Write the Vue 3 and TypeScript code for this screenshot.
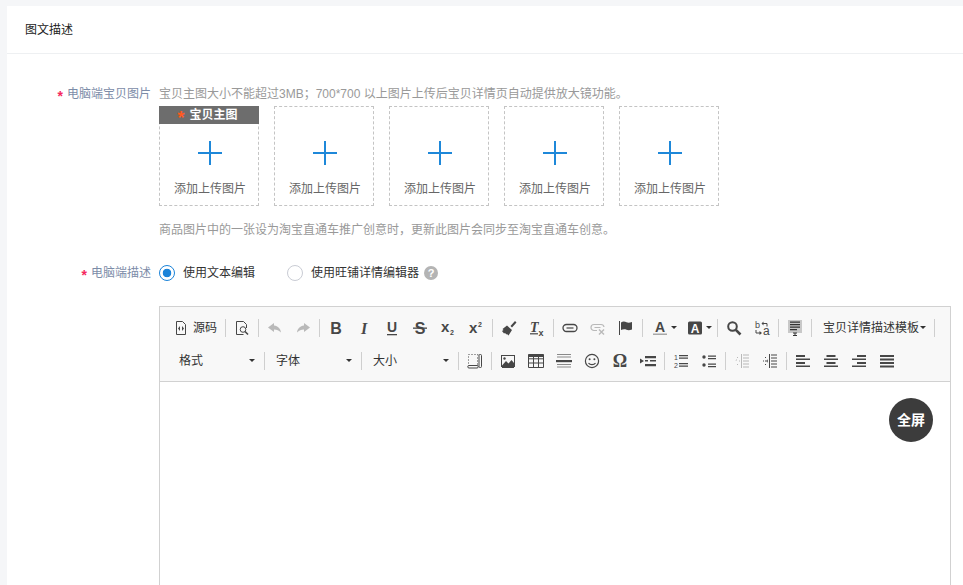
<script setup lang="ts">
interface Tool {
  kind: 'sep' | 'icon' | 'source' | 'color' | 'combo' | 'drop'
  name?: string
  label?: string
  off?: boolean
}

const icons: Record<string, string> = {
  source: '<path d="M3.5 1.5h6l3 3v10h-9z" fill="none" stroke="#474747"/><path d="M7 6L5 8.5 7 11zM9 6l2 2.5L9 11z" fill="#474747"/>',
  preview: '<path d="M12.5 8V4.5l-3-3h-7v13h7" fill="none" stroke="#474747"/><circle cx="9" cy="9.5" r="2.8" fill="none" stroke="#474747"/><path d="M11 11.5l3 3" stroke="#474747" stroke-width="1.6"/>',
  undo: '<path d="M7 3L1 7.5 7 12V9.5c3 0 5 1 7 3-.5-4-3-6.5-7-7z" fill="#474747"/>',
  redo: '<path d="M9 3l6 4.5L9 12V9.5c-3 0-5 1-7 3 .5-4 3-6.5 7-7z" fill="#474747"/>',
  bold: '<text x="8" y="14" text-anchor="middle" font-size="16" font-weight="700" font-family="Liberation Sans" fill="#474747">B</text>',
  italic: '<text x="8" y="14" text-anchor="middle" font-size="16" font-style="italic" font-weight="700" font-family="Liberation Serif" fill="#474747">I</text>',
  underline: '<text x="8" y="12" text-anchor="middle" font-size="14" font-weight="700" font-family="Liberation Sans" fill="#474747">U</text><path d="M3 14h10v1.3H3z" fill="#474747"/>',
  strike: '<text x="8" y="14" text-anchor="middle" font-size="16" font-weight="700" font-family="Liberation Sans" fill="#474747">S</text><path d="M1 7.5h14v1.3H1z" fill="#474747"/>',
  sub: '<text x="1" y="12" font-size="15" font-weight="700" font-family="Liberation Sans" fill="#474747">x</text><text x="10" y="15" font-size="7" font-weight="700" font-family="Liberation Sans" fill="#474747">2</text>',
  sup: '<text x="1" y="13" font-size="15" font-weight="700" font-family="Liberation Sans" fill="#474747">x</text><text x="10" y="7" font-size="7" font-weight="700" font-family="Liberation Sans" fill="#474747">2</text>',
  brush: '<path d="M9.5 6L14 1l1.5 1.5L11 7.5zM6 5.5l5 4.5-3.5 5.5L6 14l-.5.5L4 13l-1 .5L1 11l1.5-1-1-1z" fill="#474747"/>',
  clear: '<text x="1" y="12" font-size="14" font-style="italic" font-weight="700" font-family="Liberation Serif" fill="#474747">T</text><path d="M1 13.2h8v1.2H1z" fill="#474747"/><text x="9.5" y="15.5" font-size="9" font-weight="700" font-family="Liberation Sans" fill="#474747">x</text>',
  link: '<path d="M4.5 4.5h7a3.5 3.5 0 0 1 0 7h-7a3.5 3.5 0 0 1 0-7z" fill="none" stroke="#474747" stroke-width="1.3"/><path d="M4.5 8h7" stroke="#474747" stroke-width="1.2"/>',
  unlink: '<path d="M7 10.5H4a3 3 0 0 1 0-6h7a3 3 0 0 1 3 2.5M4.5 7.5h6" fill="none" stroke="#474747" stroke-width="1.2"/><path d="M9 9.5l5 5M14 9.5l-5 5" stroke="#474747" stroke-width="1.4"/>',
  flag: '<path d="M1.5 1v14" stroke="#474747"/><path d="M3 2.5c2-1.5 4-1 5.5-.3s3 .6 5.5-.2v7.5c-2.500.8-4 .8-5.500.2S5 9 3 10z" fill="#474747"/>',
  textColor: '<text x="8" y="12" text-anchor="middle" font-size="14" font-weight="700" font-family="Liberation Sans" fill="#474747">A</text><path d="M1 13.5h14V15H1z" fill="#a8a8a8"/>',
  bgColor: '<path d="M2.5 1.5h11A1.500 1.500 0 0 1 15 3v10a1.500 1.500 0 0 1-1.500 1.500h-11A1.500 1.500 0 0 1 1 13V3a1.500 1.500 0 0 1 1.500-1.500z" fill="#474747"/><text x="8" y="12.5" text-anchor="middle" font-size="12" font-weight="700" font-family="Liberation Sans" fill="#fff">A</text>',
  search: '<circle cx="6.5" cy="6.5" r="4.3" fill="none" stroke="#474747" stroke-width="2"/><path d="M9.8 9.800l4.700 4.700" stroke="#474747" stroke-width="2.6"/>',
  replace: '<text x="1" y="8" font-size="9" font-family="Liberation Sans" fill="#474747">b</text><text x="9" y="15" font-size="12" font-family="Liberation Sans" fill="#474747">a</text><path d="M9 3.5h4v3M2 10v3h4" fill="none" stroke="#474747"/><path d="M9.5 1.5l-2 2 2 2zM5.5 11l2.500 2-2.500 2z" fill="#474747"/>',
  template: '<path d="M1 0h14v13H1z" fill="#c8c8c8"/><path d="M3 1.5h10v1.300H3zM3 4h10v1.300H3zM3 6.500h10v1.300H3zM3 9h7v1.300H3z" fill="#333"/><path d="M6 12.500h4v1H8.500V15H10v1H6v-1h1.500v-1.500H6z" fill="#333"/>',
  blocks: '<path d="M1.5 1.5h1M4.5 1.5h1M7.5 1.5h1M10.5 1.5h.5v1M10.5 4.5v1M10.5 7.5v1M10.5 10.5v1M1.5 3.5v1M1.5 6.5v1M1.5 9.5v1" stroke="#474747" fill="none"/><path d="M2 12.500h8a1 1 0 0 1 0 2.500H2a1 1 0 0 1 0-2.500zM13 1.500h.5a1 1 0 0 1 1 1v11a1 1 0 0 1-1 1H13a1 1 0 0 1-1-1v-11a1 1 0 0 1 1-1z" fill="none" stroke="#474747"/>',
  image: '<path fill-rule="evenodd" d="M1 2h14v12H1zM2 3v10h12V3z" fill="#474747"/><path d="M2 12.500l4-4.500 2.500 2.500 3-3.500 2.500 3v5H2z" fill="#474747"/><circle cx="4.5" cy="5.5" r="1.2" fill="#474747"/>',
  table: '<path d="M.5 1.500h15V4H.5z" fill="#474747"/><path d="M.5 1.500h15v13H.5zM.5 5.800h15M.5 10h15M5.500 3.500v11M10.500 3.500v11" fill="none" stroke="#474747"/>',
  hr: '<path d="M1 1.5h14M1 4h14M1 11.500h14M1 14h14" stroke="#8a8a8a"/><path d="M0 7h16v2.200H0z" fill="#474747"/>',
  smile: '<circle cx="8" cy="8" r="6.6" fill="none" stroke="#474747" stroke-width="1.2"/><circle cx="5.6" cy="6.3" r="1" fill="#474747"/><circle cx="10.4" cy="6.3" r="1" fill="#474747"/><path d="M4.5 10c1.500 2.200 5.500 2.200 7 0" fill="none" stroke="#474747" stroke-width="1.2"/>',
  omega: '<text x="8" y="14" text-anchor="middle" font-size="18" font-weight="700" font-family="Liberation Serif" fill="#474747">Ω</text>',
  indentBlock: '<path d="M0 5.500l4 2.500-4 2.500zM5 3h11v2.200H5zM5 7h3v1.500H5zM10 7h6v1.500h-6zM5 11h11v2.200H5z" fill="#474747"/>',
  ol: '<text x="1" y="7" font-size="7" font-family="Liberation Sans" fill="#474747">1</text><text x="1" y="14.5" font-size="7" font-family="Liberation Sans" fill="#474747">2</text><path d="M6 2h9v1.200H6zM6 4.500h9v1.200H6zM6 10h9v1.200H6zM6 12.500h9v1.200H6z" fill="#474747"/>',
  ul: '<circle cx="3" cy="4" r="1.7" fill="#474747"/><circle cx="3" cy="12" r="1.7" fill="#474747"/><path d="M7 2.500h8v1.200H7zM7 5h8v1.200H7zM7 10.500h8v1.200H7zM7 13h8v1.200H7z" fill="#474747"/>',
  outdent: '<path d="M9 1.500h6v1.100H9zM9 4.500h6v1.100H9zM9 7.500h6v1.100H9zM9 10.500h6v1.100H9zM9 13.500h6v1.100H9zM7 1v14h1V1z" fill="#474747"/><path d="M1 7.500h2V6l-2 2zM5 7.500h1v1H5zM3 4h1v1H3zM3 11h1v1H3z" fill="#474747"/>',
  indent: '<path d="M9 1.500h6v1.100H9zM9 4.500h6v1.100H9zM9 7.500h6v1.100H9zM9 10.500h6v1.100H9zM9 13.500h6v1.100H9zM7 1v14h1V1z" fill="#474747"/><path d="M1 7.500h1v1H1zM3 7.500h2V6l1 2-1 2V8.500H3zM3 4h1v1H3zM3 11h1v1H3z" fill="#474747"/>',
  alignLeft: '<path d="M1 2h9v2H1zM1 5.500h14V7H1zM1 9h9v2H1zM1 12.500h14V14H1z" fill="#474747"/>',
  alignCenter: '<path d="M3.500 2h9v2h-9zM1 5.500h14V7H1zM3.500 9h9v2h-9zM1 12.500h14V14H1z" fill="#474747"/>',
  alignRight: '<path d="M6 2h9v2H6zM1 5.500h14V7H1zM6 9h9v2H6zM1 12.500h14V14H1z" fill="#474747"/>',
  justify: '<path d="M1 2h14v2H1zM1 5.500h14v2H1zM1 9h14v2H1zM1 12.500h14v2H1z" fill="#474747"/>',
}

const sep: Tool = { kind: 'sep' }
const btn = (name: string, off = false): Tool => ({ kind: 'icon', name, off })

const rowOne: Tool[] = [
  { kind: 'source', name: 'source', label: '源码' },
  sep,
  btn('preview'),
  sep,
  btn('undo', true),
  btn('redo', true),
  sep,
  btn('bold'),
  btn('italic'),
  btn('underline'),
  btn('strike'),
  btn('sub'),
  btn('sup'),
  sep,
  btn('brush'),
  btn('clear'),
  sep,
  btn('link'),
  btn('unlink', true),
  btn('flag'),
  sep,
  { kind: 'color', name: 'textColor' },
  { kind: 'color', name: 'bgColor' },
  sep,
  btn('search'),
  btn('replace'),
  sep,
  btn('template'),
  sep,
  { kind: 'drop', label: '宝贝详情描述模板' },
  sep,
]

const rowTwo: Tool[] = [
  { kind: 'combo', label: '格式' },
  sep,
  { kind: 'combo', label: '字体' },
  sep,
  { kind: 'combo', label: '大小' },
  sep,
  btn('blocks'),
  sep,
  btn('image'),
  btn('table'),
  btn('hr'),
  btn('smile'),
  btn('omega'),
  btn('indentBlock'),
  sep,
  btn('ol'),
  btn('ul'),
  sep,
  btn('outdent', true),
  btn('indent'),
  sep,
  btn('alignLeft'),
  btn('alignCenter'),
  btn('alignRight'),
  btn('justify'),
]

const rows = [rowOne, rowTwo]
const slots = [0, 1, 2, 3, 4]
</script>

<template>
  <div class="page">
    <div class="card">
      <div class="card-head">图文描述</div>
      <div class="form">
        <div class="row">
          <div class="label"><i class="req">*</i>电脑端宝贝图片</div>
          <div class="content">
            <div class="hint">宝贝主图大小不能超过3MB；700*700 以上图片上传后宝贝详情页自动提供放大镜功能。</div>
            <div class="uploads">
              <div v-for="n in slots" :key="n" class="upload">
                <div v-if="n === 0" class="upload-tag"><i>*</i>宝贝主图</div>
                <div class="plus"></div>
                <div class="upload-text">添加上传图片</div>
              </div>
            </div>
            <div class="hint hint-low">商品图片中的一张设为淘宝直通车推广创意时，更新此图片会同步至淘宝直通车创意。</div>
          </div>
        </div>

        <div class="row row-desc">
          <div class="label"><i class="req">*</i>电脑端描述</div>
          <div class="content">
            <div class="radios">
              <span class="radio on"></span>
              <span class="radio-text first">使用文本编辑</span>
              <span class="radio"></span>
              <span class="radio-text">使用旺铺详情编辑器</span>
              <span class="help">?</span>
            </div>
            <div class="editor">
              <div class="toolbar">
                <div v-for="(row, r) in rows" :key="r" class="tool-row">
                  <template v-for="(t, i) in row" :key="i">
                    <span v-if="t.kind === 'sep'" class="sep"></span>
                    <span v-else-if="t.kind === 'icon'" class="tool" :class="{ off: t.off }">
                      <svg viewBox="-2 -2 20 20" width="20" height="20" v-html="icons[t.name!]"></svg>
                    </span>
                    <span v-else-if="t.kind === 'source'" class="tool source">
                      <svg viewBox="-2 -2 20 20" width="20" height="20" v-html="icons[t.name!]"></svg>
                      <span>{{ t.label }}</span>
                    </span>
                    <span v-else-if="t.kind === 'color'" class="tool color">
                      <svg viewBox="-2 -2 20 20" width="20" height="20" v-html="icons[t.name!]"></svg>
                      <b class="caret"></b>
                    </span>
                    <span v-else-if="t.kind === 'combo'" class="combo">
                      <span>{{ t.label }}</span>
                      <b class="caret"></b>
                    </span>
                    <span v-else class="drop">
                      <span>{{ t.label }}</span>
                      <b class="caret"></b>
                    </span>
                  </template>
                </div>
              </div>
              <div class="editor-body">
                <div class="fullscreen">全屏</div>
              </div>
            </div>
          </div>
        </div>
      </div>
    </div>
  </div>
</template>

<style>
html,
body {
  margin: 0;
  overflow: hidden;
}
</style>

<style scoped>
.page {
  height: 585px;
  overflow: hidden;
  box-sizing: border-box;
  padding: 6px 0 0 7px;
  background: #f5f6f8;
  font-family: "Liberation Sans", "Noto Sans CJK SC", sans-serif;
  font-size: 12px;
  line-height: 16px;
  color: #333;
}
.card {
  background: #fff;
  height: 579px;
}
.card-head {
  height: 47px;
  line-height: 49px;
  padding-left: 18px;
  border-bottom: 1px solid #eef0f2;
  color: #222;
}
.form {
  padding-top: 32px;
}
.row {
  display: flex;
  gap: 8px;
}
.row-desc {
  margin-top: 27px;
}
.label {
  width: 144px;
  text-align: right;
  color: #7c8ca8;
  flex: none;
}
.req {
  color: #f5295e;
  font-style: normal;
  font-size: 14px;
  font-weight: 700;
  line-height: 1;
  vertical-align: -3px;
  margin-right: 4px;
}
.content {
  width: 792px;
  flex: none;
}
.hint {
  color: #999;
}
.hint-low {
  margin-top: 16px;
}
.uploads {
  display: flex;
  gap: 15px;
  margin-top: 4px;
}
.upload {
  position: relative;
  width: 100px;
  height: 100px;
  box-sizing: border-box;
  border: 1px dashed #c4c4c4;
  padding-left: 2px;
  display: flex;
  flex-direction: column;
  align-items: center;
}
.upload-tag {
  position: absolute;
  left: -1px;
  right: -1px;
  top: -1px;
  height: 18px;
  line-height: 18px;
  padding-right: 3px;
  background: #6d6d6d;
  color: #fff;
  font-weight: 700;
  text-align: center;
}
.upload-tag i {
  color: #ff5a1f;
  font-style: normal;
  font-size: 18px;
  line-height: 1;
  vertical-align: -5px;
  margin-right: 5px;
}
.plus {
  width: 24px;
  height: 24px;
  margin-top: 34px;
  background:
    linear-gradient(#1e88d9, #1e88d9) center / 24px 2px no-repeat,
    linear-gradient(#1e88d9, #1e88d9) center / 2px 24px no-repeat;
}
.upload-text {
  margin-top: 16px;
  color: #666;
}
.radios {
  display: flex;
  align-items: center;
  height: 16px;
}
.radio {
  width: 16px;
  height: 16px;
  box-sizing: border-box;
  border: 1px solid #c9ccd4;
  border-radius: 50%;
  flex: none;
}
.radio.on {
  border-color: #1a83d9;
  background: radial-gradient(circle, #1a83d9 0 4px, #fff 4.6px);
}
.radio-text {
  margin-left: 8px;
  color: #333;
}
.radio-text.first {
  margin-right: 32px;
}
.help {
  width: 14px;
  height: 14px;
  margin-left: 5px;
  border-radius: 50%;
  background: #b4b4b4;
  color: #fff;
  font-size: 11px;
  font-weight: 700;
  line-height: 14px;
  text-align: center;
}
.editor {
  margin-top: 25px;
  border: 1px solid #d1d1d1;
  border-bottom: 0;
}
.toolbar {
  background: #f8f8f8;
  border-bottom: 1px solid #d1d1d1;
  padding: 4px 0 4px 8px;
}
.tool-row {
  display: flex;
  align-items: center;
  height: 33px;
}
.sep {
  width: 3px;
  height: 18px;
  flex: none;
  box-sizing: border-box;
  border-left: 1px solid #cfcfcf;
  margin-left: 2px;
}
.tool {
  width: 28px;
  height: 20px;
  flex: none;
  display: flex;
  align-items: center;
  justify-content: center;
}
.tool svg {
  display: block;
  flex: none;
}
.tool.off svg {
  opacity: 0.35;
}
.source {
  width: 55px;
  justify-content: flex-start;
  padding-left: 3px;
  box-sizing: border-box;
  gap: 2px;
}
.color {
  width: 35px;
  justify-content: flex-start;
  padding-left: 5px;
  box-sizing: border-box;
  gap: 1px;
}
.caret {
  width: 0;
  height: 0;
  flex: none;
  border-top: 3px solid #333;
  border-left: 3px solid transparent;
  border-right: 3px solid transparent;
}
.combo {
  width: 92px;
  flex: none;
  box-sizing: border-box;
  padding: 0 7px 0 9px;
  display: flex;
  align-items: center;
  justify-content: space-between;
}
.combo:first-child {
  margin-left: 2px;
}
.drop {
  width: 118px;
  flex: none;
  box-sizing: border-box;
  padding-left: 9px;
  display: flex;
  align-items: center;
  gap: 1px;
}
.editor-body {
  position: relative;
  height: 300px;
  background: #fff;
}
.fullscreen {
  position: absolute;
  top: 16px;
  right: 17px;
  width: 44px;
  height: 44px;
  border-radius: 50%;
  background: #3c3c3c;
  color: #fff;
  font-size: 14px;
  font-weight: 700;
  line-height: 44px;
  text-align: center;
}
</style>
